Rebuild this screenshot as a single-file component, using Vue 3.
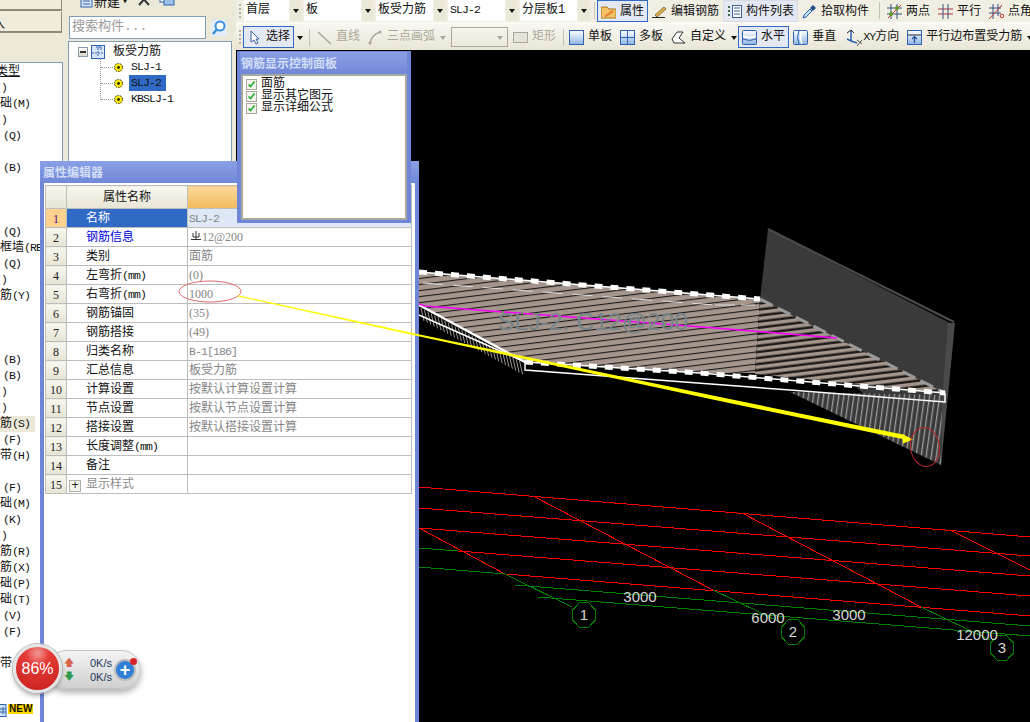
<template>
  <div class="app">
    <!-- left: component type list, clipped by the window edge -->
    <aside class="side">
      <div class="side-btn first"></div>
      <div class="side-btn"><span class="clip">入</span></div>
      <div class="side-list">
        <div v-for="(r, i) in sideRows" :key="i" :class="['side-row', r.cls]">
          <template v-if="r.cjk">{{ r.cjk }}</template><span v-if="r.lat" class="la">{{ r.lat }}</span>
        </div>
        <div class="side-row new-row">
          <svg width="7" height="13" viewBox="0 0 7 13"><rect x="-3" y=".5" width="9" height="12" fill="#cfe2f7" stroke="#2f62b0"/><path d="M3 3v7M-1 5h7M-1 8h7" stroke="#2f62b0"/></svg>
          <span class="new-tag">NEW</span>
        </div>
      </div>
    </aside>

    <!-- component tree -->
    <section class="tree-panel">
      <div class="tree-tools">
        <svg width="14" height="14" viewBox="0 0 14 14"><rect x="2" y="0" width="11" height="13" fill="#d9e6f7" stroke="#2f62b0"/><path d="M4 4h7M4 7h7M4 10h7" stroke="#2f62b0"/><path d="M0 1h4" stroke="#e8a020" stroke-width="2"/></svg>
        <span class="new-label">新建</span>
        <span class="caret">▾</span>
        <svg class="del" width="12" height="12" viewBox="0 0 12 12"><path d="M1 0l10 11M11 0L1 11" stroke="#333" stroke-width="2"/></svg>
        <svg class="copy" width="16" height="12" viewBox="0 0 16 12"><rect x="1" y="0" width="9" height="8" fill="#fff" stroke="#2f62b0"/><rect x="5" y="3" width="10" height="8" fill="#9cc0ea" stroke="#2f62b0"/></svg>
      </div>
      <div class="search">
        <div class="search-input">搜索构件...</div>
        <svg width="18" height="18" viewBox="0 0 18 18"><rect x="1" y="1" width="16" height="16" rx="2" fill="#e3eefb"/><circle cx="10" cy="7" r="4.5" fill="#fff" stroke="#3b8fd8" stroke-width="2"/><path d="M7 10l-4 5" stroke="#3b8fd8" stroke-width="2.4"/></svg>
      </div>
      <div class="tree">
        <div class="tree-root">
          <span class="minus"></span>
          <svg width="14" height="14" viewBox="0 0 14 14"><rect x=".5" y=".5" width="13" height="13" fill="#d8e6f8" stroke="#2f62b0"/><path d="M1 8h12M7 3v9" stroke="#2f62b0" stroke-dasharray="2 1"/><path d="M5 2h5v3" fill="none" stroke="#2f62b0"/></svg>
          <span class="root-name">板受力筋</span>
        </div>
        <div class="tree-items">
          <div v-for="t in treeItems" :key="t" class="tree-item">
            <span class="dots"></span>
            <svg width="11" height="11" viewBox="0 0 11 11"><circle cx="5.5" cy="5.5" r="4" fill="#ffee00" stroke="#222" stroke-dasharray="1.5 1"/><circle cx="5.5" cy="5.5" r="1.4" fill="#222"/></svg>
            <span :class="['item-name', 'la', { selected: t === 'SLJ-2' }]">{{ t }}</span>
          </div>
        </div>
      </div>
    </section>

    <main class="main">
      <div class="tb tb1">
        <span class="grip"></span>
        <div v-for="c in combos" :key="c.text" :class="['combo', c.cls]">
          <span class="combo-text" :class="{ la: c.lat }">{{ c.text }}</span>
          <span class="combo-arrow"></span>
        </div>
        <span class="sep sep-a"></span>

        <div class="btn on">
          <svg class="ic" viewBox="0 0 15 15"><path d="M0 3h6l2 2h7v9H0z" fill="#f2c464" stroke="#a87a20"/><path d="M3 12l8-6 2 2-8 5z" fill="#e9863a"/></svg>属性
        </div>
        <div class="btn">
          <svg class="ic" viewBox="0 0 15 15"><path d="M3 11l9-8 2 2-9 8z" fill="#e5b04a" stroke="#5a4a20" stroke-width=".7"/><path d="M0 13.500h13" stroke="#222"/></svg>编辑钢筋
        </div>
        <div class="btn soft">
          <svg class="ic" viewBox="0 0 15 15"><rect x="5.500" y="1.500" width="9" height="12" fill="#fff" stroke="#3a5f90"/><path d="M7 4h6M7 7h6M7 10h6" stroke="#3a5f90"/><path d="M1 3h2M1 7h2M1 11h2" stroke="#3a6a50" stroke-width="2"/></svg>构件列表
        </div>
        <div class="btn">
          <svg class="ic" viewBox="0 0 15 15"><path d="M1 14l1-3 6-6 2 2-6 6z" fill="#bfe0f5" stroke="#2a62a8"/><path d="M8 4l3-3 3 3-3 3z" fill="#204f90"/></svg>拾取构件
        </div>
        <span class="sep sep-b"></span>
        <div class="btn">
          <svg class="ic" viewBox="0 0 15 15"><path d="M0 4h15M0 10h15M4 0v15M10 0v15" stroke="#33507e"/><path d="M1 14L14 1" stroke="#d23030"/><circle cx="4" cy="10" r="2" fill="#5a9a20"/><circle cx="10" cy="4" r="2" fill="#5a9a20"/></svg>两点
        </div>
        <div class="btn">
          <svg class="ic" viewBox="0 0 15 15"><path d="M0 5h15M0 10h15" stroke="#b03040"/><path d="M5 0v15M10 0v15" stroke="#33507e"/></svg>平行
        </div>
        <div class="btn">
          <svg class="ic" viewBox="0 0 15 15"><path d="M0 4h12M0 9h12M4 0v15M9 0v12" stroke="#33507e"/><path d="M0 15L13 1" stroke="#d23030"/><circle cx="13" cy="12" r="1.800" fill="none" stroke="#d23030"/></svg>点角
        </div>
      </div>

      <div class="tb tb2">
        <span class="grip"></span>
        <div class="btn on">
          <svg class="ic" viewBox="0 0 15 15"><path d="M4 1v11l3-2 2 4 2-1-2-4h3z" fill="#fff" stroke="#3a5fa0"/></svg>选择
        </div>
        <span class="arrow wide"></span>
        <span class="sep sep-c"></span>
        <div class="btn off">
          <svg class="ic" viewBox="0 0 15 15"><path d="M1 2l13 12" stroke="#aca899" stroke-width="1.500"/></svg>直线
        </div>
        <div class="btn off">
          <svg class="ic" viewBox="0 0 15 15"><path d="M2 14Q3 5 12 2" fill="none" stroke="#aca899" stroke-width="1.500"/><circle cx="2" cy="13" r="1.500" fill="#aca899"/><circle cx="12" cy="2" r="1.500" fill="#aca899"/></svg>三点画弧
        </div>
        <span class="arrow dim"></span>
        <div class="off-combo"><span class="arrow dim"></span></div>
        <div class="btn off">
          <svg class="ic" viewBox="0 0 15 15"><rect x=".5" y="2.500" width="14" height="10" fill="#e6e4da" stroke="#aca899"/></svg>矩形
        </div>
        <span class="sep sep-d"></span>
        <div class="btn">
          <svg class="ic" viewBox="0 0 15 15"><rect x=".5" y=".5" width="14" height="14" fill="url(#pane)" stroke="#2f62b0"/></svg>单板
        </div>
        <div class="btn">
          <svg class="ic" viewBox="0 0 15 15"><rect x=".5" y=".5" width="14" height="14" fill="url(#pane)" stroke="#2f62b0"/><path d="M7.500 0v15M0 7.500h15" stroke="#2f62b0"/></svg>多板
        </div>
        <div class="btn">
          <svg class="ic" viewBox="0 0 15 15"><path d="M1 9l5-7h6l-4 6 6 5H3z" fill="#fff" stroke="#333"/></svg>自定义
        </div>
        <span class="arrow"></span>
        <div class="btn on">
          <svg class="ic" viewBox="0 0 15 15"><rect x=".5" y=".5" width="14" height="14" rx="1" fill="url(#pane)" stroke="#2f62b0"/><path d="M1 6q6.500 3 13 0" fill="none" stroke="#fff" stroke-width="1.500"/><path d="M1 9q6.500 3 13 0" fill="none" stroke="#2f62b0"/></svg>水平
        </div>
        <div class="btn">
          <svg class="ic" viewBox="0 0 15 15"><rect x=".5" y=".5" width="14" height="14" rx="1" fill="url(#pane)" stroke="#2f62b0"/><path d="M9 1q-3 6.500 0 13" fill="none" stroke="#fff" stroke-width="1.500"/><path d="M6 1q-3 6.500 0 13" fill="none" stroke="#2f62b0"/></svg>垂直
        </div>
        <div class="btn xy">
          <svg class="ic-xy" viewBox="0 0 19 17"><path d="M7 1v11l-4-2M7 12l6 2" fill="none" stroke="#2f62b0" stroke-width="1.500"/><path d="M3 4l4-3 3 3" fill="none" stroke="#222"/><path d="M13 11l5 4M18 11l-5 6" stroke="#333" stroke-width=".8"/></svg><span><span class="la">XY</span>方向</span>
        </div>
        <div class="btn">
          <svg class="ic" viewBox="0 0 15 15"><rect x=".5" y=".5" width="14" height="14" fill="url(#pane)" stroke="#2f62b0"/><path d="M1 5h13" stroke="#333"/><path d="M7.500 13V7M5 9l2.500-2.500L10 9" fill="none" stroke="#1c4f9a" stroke-width="1.200"/></svg>平行边布置受力筋
        </div>
        <span class="arrow"></span>
      </div>

      <!-- 3d view, drawn in page coordinates -->
      <svg class="view" viewBox="236 50 794 672">
        <defs>
          <linearGradient id="pane" x1="0" y1="0" x2="0" y2="1"><stop offset="0" stop-color="#fff"/><stop offset="1" stop-color="#8fb4e6"/></linearGradient>
          <pattern id="hatch" width="40" height="6" patternUnits="userSpaceOnUse" patternTransform="rotate(-7)">
            <rect width="40" height="6" fill="#a5968d"/>
            <rect y="3" width="40" height="1.100" fill="#1c1a18"/>
          </pattern>
          <pattern id="hatch2" width="40" height="6" patternUnits="userSpaceOnUse" patternTransform="rotate(-7)">
            <rect width="40" height="6" fill="#a5968d"/>
            <rect y="2.500" width="40" height="2.400" fill="#181614"/>
          </pattern>
          <pattern id="bars" width="5" height="20" patternUnits="userSpaceOnUse" patternTransform="rotate(8)">
            <rect width="5" height="20" fill="#3a3a3a"/>
            <rect width="1.300" height="20" fill="#9c9a9a"/>
          </pattern>
        </defs>

        <!-- wall -->
        <polygon points="768,229 950,323 945,400 941,465 760,299" fill="#3a3a3a"/>
        <polygon points="948,323 955,323 941,466 942,400" fill="#4a4a4a"/>
        <path d="M768,229L954,322" stroke="#4c4c4c" stroke-width="2"/>

        <!-- plate -->
        <polygon points="790,392 942,395 941,465" fill="url(#bars)"/>
        <polygon points="419,272 760,299 755,373 700,373 525,362 419,304" fill="url(#hatch)"/>
        <polygon points="760,299 945,393 755,374" fill="url(#hatch2)"/>
        <path d="M760,299L945,393" stroke="#9a9a9a" stroke-width="3" stroke-dasharray="14 6"/>

        <line v-for="(t, i) in ticks" :key="i" :x1="t.x" :y1="t.y" :x2="t.x + 3" :y2="t.y + 13" stroke="#9c9690"/>

        <path d="M419,272L760,299" stroke="#fff" stroke-width="1.500"/>
        <path d="M419,272L760,299" stroke="#fff" stroke-width="5" stroke-dasharray="8 8"/>
        <path d="M423,283L715,305" stroke="#ddd" stroke-width="1" stroke-dasharray="20 10"/>
        <path d="M715,305L755,305" stroke="#ddd" stroke-width="1" stroke-dasharray="20 6"/>
        <path d="M525,362L700,373L945,393" stroke="#fff" stroke-width="1.500" fill="none"/>
        <path d="M525,362L700,373L945,393" stroke="#fff" stroke-width="5" stroke-dasharray="8 8" fill="none"/>
        <path d="M419,305L525,362" stroke="#fff" stroke-width="2.500"/>
        <path d="M419,315L525,362V370L790,390L945,402V393" stroke="#fff" stroke-width="1.500" fill="none"/>

        <path d="M419,304L425,306L715,328L837,338" stroke="#f0f" stroke-width="1.500" fill="none"/>
        <circle v-for="d in greenDots" :key="d" :cx="d" :cy="306 + (d - 425) * 0.0759" r="1" fill="#22cc22"/>
        <text x="498" y="330" class="plate-label" textLength="190" lengthAdjust="spacingAndGlyphs">SLJ-2. C12@200</text>

        <!-- axis grid -->
        <g stroke="#f00" stroke-width="1" shape-rendering="crispEdges">
          <line x1="419" y1="487" x2="1030" y2="537"/>
          <line x1="419" y1="508" x2="1030" y2="556"/>
          <line x1="419" y1="528" x2="1030" y2="576"/>
          <line x1="458" y1="551" x2="1030" y2="596"/>
          <line x1="505" y1="574" x2="1030" y2="616"/>
          <line x1="419" y1="528" x2="505" y2="574"/>
          <line x1="533" y1="496" x2="713" y2="590"/>
          <line x1="742" y1="513" x2="921" y2="607"/>
          <line x1="950" y1="530" x2="1030" y2="570"/>
        </g>
        <g stroke="#008000" stroke-width="1" fill="none" shape-rendering="crispEdges">
          <line x1="419" y1="548" x2="458" y2="551"/>
          <line x1="419" y1="567" x2="505" y2="574"/>
          <line x1="505" y1="574" x2="572" y2="607"/>
          <line x1="713" y1="590" x2="782" y2="623"/>
          <line x1="921" y1="607" x2="990" y2="640"/>
          <line x1="515" y1="585" x2="1030" y2="626"/>
          <line x1="538" y1="597" x2="1030" y2="636"/>
          <polygon v-for="a in axes" :key="a.n" :points="octagon(a.x, a.y)"/>
        </g>
        <g class="dim">
          <text x="640" y="602">3000</text>
          <text x="768" y="623">6000</text>
          <text x="849" y="620">3000</text>
          <text x="977" y="640">12000</text>
          <text v-for="a in axes" :key="a.n" :x="a.x" :y="a.y + 5">{{ a.n }}</text>
        </g>
      </svg>
    </main>

    <!-- floating property editor -->
    <div class="editor">
      <div class="win-title">属性编辑器</div>
      <table class="grid">
        <colgroup><col class="c-no"><col class="c-name"><col></colgroup>
        <thead>
          <tr><th class="no"></th><th class="hd">属性名称</th><th class="hd-val"></th></tr>
        </thead>
        <tbody>
          <tr v-for="(r, i) in props" :key="i" :class="{ active: i === 0 }">
            <td class="no la-no">{{ i + 1 }}</td>
            <td :class="['name', { link: i === 1, muted: i === 14 }]">
              <span v-if="i === 14" class="plus">+</span>{{ r.name }}<span v-if="r.unit" class="la">(mm)</span>
            </td>
            <td class="val">
              <svg v-if="r.bar" class="rebar" width="10" height="10" viewBox="0 0 10 10"><path d="M2 2v4h6V2M5 0v8M0 8.500h10" fill="none" stroke="#333"/></svg><span :class="r.cls">{{ r.val }}</span>
            </td>
          </tr>
        </tbody>
      </table>
    </div>

    <!-- rebar display panel -->
    <div class="panel">
      <div class="win-title">钢筋显示控制面板</div>
      <div class="panel-body">
        <label v-for="o in options" :key="o" class="check">
          <svg width="11" height="11" viewBox="0 0 11 11"><rect x=".5" y=".5" width="10" height="10" fill="#f4f4ee" stroke="#a8a89c"/><path d="M2.500 5.500l2 2 4-5" fill="none" stroke="#1fae2c" stroke-width="1.600"/></svg>
          <span>{{ o }}</span>
        </label>
      </div>
    </div>

    <!-- hand drawn marks over everything -->
    <svg class="marks" viewBox="0 0 1030 722">
      <ellipse cx="210" cy="291.500" rx="31" ry="10.500" fill="none" stroke="#e06a6a"/>
      <polygon points="238,295.300 415,333.500 715,396 905,435 905,439.500 715,400 415,335.500 238,296.500" fill="#ff0"/>
      <polygon points="902,434 913,439.500 903,443.500" fill="#ff0"/>
      <ellipse cx="925" cy="447" rx="14.500" ry="19.500" fill="none" stroke="#b82a2a" transform="rotate(-8 925 447)"/>
    </svg>

    <!-- speed ball -->
    <div class="ball">
      <div class="pill">
        <div class="rates">
          <div class="rate"><span class="up">🡅</span><span>0K/s</span></div>
          <div class="rate"><span class="down">🡇</span><span>0K/s</span></div>
        </div>
        <span class="add">+<i></i></span>
      </div>
      <div class="gauge">86%</div>
    </div>
  </div>
</template>

<script setup>
const sideRows = [
  { cjk: '类型', cls: 'head' }, { lat: ')', cls: 'in1' }, { cjk: '础', lat: '(M)' }, { lat: ')', cls: 'in1' }, { lat: '(Q)', cls: 'in2' },
  {}, { lat: '(B)', cls: 'in2' }, {}, {}, {},
  { lat: '(Q)', cls: 'in2' }, { cjk: '框墙', lat: '(RE' }, { lat: '(Q)', cls: 'in2' }, { lat: ')', cls: 'in1' }, { cjk: '筋', lat: '(Y)' },
  {}, {}, {}, { lat: '(B)', cls: 'in2' }, { lat: '(B)', cls: 'in2' },
  { lat: ')', cls: 'in1' }, { lat: ')', cls: 'in1' }, { cjk: '筋', lat: '(S)', cls: 'hi' }, { lat: '(F)', cls: 'in2' }, { cjk: '带', lat: '(H)' },
  {}, { lat: '(F)', cls: 'in2' }, { cjk: '础', lat: '(M)' }, { lat: '(K)', cls: 'in2' }, { lat: ')', cls: 'in1' },
  { cjk: '筋', lat: '(R)' }, { cjk: '筋', lat: '(X)' }, { cjk: '础', lat: '(P)' }, { cjk: '础', lat: '(T)' }, { lat: '(V)', cls: 'in2' },
  { lat: '(F)', cls: 'in2' }, {}, { cjk: '带' }, {}, {}
]

const treeItems = ['SLJ-1', 'SLJ-2', 'KBSLJ-1']

const combos = [
  { text: '首层', cls: 'c1' },
  { text: '板', cls: 'c2' },
  { text: '板受力筋', cls: 'c3' },
  { text: 'SLJ-2', cls: 'c4', lat: true },
  { text: '分层板1', cls: 'c5' }
]

const props = [
  { name: '名称', val: 'SLJ-2', cls: 'la' },
  { name: '钢筋信息', val: '12@200', cls: 'num', bar: true },
  { name: '类别', val: '面筋' },
  { name: '左弯折', unit: true, val: '(0)', cls: 'num' },
  { name: '右弯折', unit: true, val: '1000', cls: 'num' },
  { name: '钢筋锚固', val: '(35)', cls: 'num' },
  { name: '钢筋搭接', val: '(49)', cls: 'num' },
  { name: '归类名称', val: 'B-1[186]', cls: 'la' },
  { name: '汇总信息', val: '板受力筋' },
  { name: '计算设置', val: '按默认计算设置计算' },
  { name: '节点设置', val: '按默认节点设置计算' },
  { name: '搭接设置', val: '按默认搭接设置计算' },
  { name: '长度调整', unit: true, val: '' },
  { name: '备注', val: '' },
  { name: '显示样式', val: '' }
]

const options = ['面筋', '显示其它图元', '显示详细公式']

const axes = [
  { n: 1, x: 584, y: 615 },
  { n: 2, x: 793, y: 632 },
  { n: 3, x: 1002, y: 648 }
]

const octagon = (cx, cy) => {
  const pts = []
  for (let i = 0; i < 8; i++) {
    const a = (Math.PI / 4) * i + Math.PI / 8
    pts.push(`${cx + 12.5 * Math.cos(a)},${cy + 13 * Math.sin(a)}`)
  }
  return pts.join(' ')
}

// short bent bars hanging under the left edge of the plate
const ticks = []
for (let x = 421; x < 522; x += 3.4) {
  ticks.push({ x, y: 308 + (x - 421) * 0.54 })
}

const greenDots = [503, 522, 560, 578, 608, 628, 650, 665]
</script>

<style scoped>
.app {
  position: relative;
  width: 1030px;
  height: 722px;
  overflow: hidden;
  display: grid;
  grid-template-columns: 68px 168px 794px;
  background: #ece9d8;
  color: #111;
  font: 12px/16px "Liberation Mono", "Noto Sans CJK SC", monospace;
}

.la {
  font-size: 11.5px;
  letter-spacing: -0.9px;
}
.num {
  font-family: "Liberation Serif", serif;
  font-size: 12px;
}

/* left list */
.side {
  display: flex;
  flex-direction: column;
  height: 722px;
  overflow: hidden;
}
.side-btn {
  width: 62px;
  height: 21px;
  margin-bottom: 1px;
  background: #efecdc;
  border-bottom: 2px solid #8c8a7c;
  border-right: 1px solid #8c8a7c;
  box-sizing: border-box;
  overflow: hidden;
  line-height: 26px;
}
.side-btn.first {
  height: 11px;
}
.clip {
  margin-left: -7px;
}
.side-list {
  margin-top: 28px;
  width: 63px;
  flex: 1;
  background: #fff;
  border-top: 1px solid #7f9db9;
  border-right: 1px solid #7f9db9;
  box-sizing: border-box;
  padding-top: 1px;
  white-space: nowrap;
  overflow: hidden;
}
.side-row {
  height: 16px;
}
.head {
  text-indent: -4px;
  text-decoration: underline;
}
.in1 {
  padding-left: 1px;
}
.in2 {
  padding-left: 3px;
}
.hi {
  width: 35px;
  background: #ece9d8;
}
.new-row {
  display: flex;
  align-items: flex-start;
  gap: 1px;
}
.new-tag {
  background: #ffd800;
  font: bold 10px/10px "Liberation Sans", sans-serif;
  padding: 0 1px;
}

/* tree */
.tree-panel {
  height: 722px;
  display: flex;
  flex-direction: column;
}
.tree-tools {
  height: 15px;
  box-sizing: border-box;
  display: flex;
  align-items: flex-end;
  padding: 0 0 7px 11px;
  overflow: hidden;
}
.new-label {
  margin: 0 2px 0 1px;
  line-height: 16px;
  position: relative;
  top: 3px;
  font-size: 13px;
}
.caret {
  font-size: 10px;
  line-height: 12px;
}
.del {
  margin: 0 0 2px 10px;
}
.copy {
  margin: 0 0 2px 9px;
}
.search {
  height: 25px;
  display: flex;
  align-items: center;
  gap: 4px;
  padding: 0 0 1px 1px;
}
.search-input {
  width: 137px;
  height: 23px;
  box-sizing: border-box;
  background: #fff;
  border: 1px solid #7f9db9;
  color: #9a9a9a;
  font-size: 13px;
  line-height: 20px;
  padding-left: 2px;
}
.tree {
  width: 164px;
  flex: 1;
  box-sizing: border-box;
  background: #fff;
  border: 1px solid #7f9db9;
  padding: 3px 0 0 9px;
}
.tree-root {
  display: flex;
  align-items: center;
  height: 14px;
}
.minus {
  width: 8px;
  height: 8px;
  border: 1px solid #8c9aa8;
  background: linear-gradient(#fff, #d8d8cc);
  position: relative;
  margin-right: 3px;
}
.minus::after {
  content: "";
  position: absolute;
  left: 1px;
  right: 1px;
  top: 3px;
  height: 2px;
  background: #333;
}
.root-name {
  margin-left: 8px;
}
.tree-items {
  margin: 0 0 0 22px;
  border-left: 1px dotted #998;
  height: 41px;
}
.tree-item {
  height: 16px;
  display: flex;
  align-items: center;
}
.dots {
  width: 12px;
  border-top: 1px dotted #998;
}
.item-name {
  margin-left: 6px;
  padding: 0 1px;
  line-height: 16px;
}
.selected {
  background: #316ac5;
  width: 37px;
  box-sizing: border-box;
  margin-left: 5px;
  padding-left: 2px;
}

/* toolbars */
.main {
  display: flex;
  flex-direction: column;
  height: 722px;
  overflow: hidden;
}
.tb {
  display: flex;
  align-items: center;
  padding-left: 3px;
  white-space: nowrap;
  flex: none;
}
.tb1 {
  background: #f1efe4;
  border-bottom: 2px solid #fbfaf5;
  padding-bottom: 1px;
  box-sizing: content-box;
  height: 21px;
}
.tb2 {
  height: 26px;
  background: linear-gradient(#f8f7f1, #e9e6d6);
}
.grip {
  width: 2px;
  height: 14px;
  margin-right: 2px;
  background: repeating-linear-gradient(#b5b2a2 0 2px, transparent 2px 4px);
  flex: none;
}
.combo {
  display: flex;
  flex: none;
  height: 21px;
  margin-right: 2px;
  align-items: stretch;
}
.c1 {
  width: 58px;
  margin-left: 1px;
}
.c2, .c3, .c4, .c5 {
  width: 70px;
}
.combo-text {
  background: #fff;
  padding-left: 2px;
  flex: 1;
  line-height: 20px;
}
.combo-arrow {
  width: 12px;
  margin-left: 1px;
  background: #ece9d8;
  position: relative;
}
.combo-arrow::after,
.arrow::after {
  content: "";
  position: absolute;
  left: 3px;
  top: 9px;
  border: 3px solid transparent;
  border-top: 4px solid #111;
  border-bottom: 0;
}
.sep {
  width: 1px;
  height: 17px;
  background: #c5c2b0;
  flex: none;
}
.sep-a { margin: 0 2px 0 2px; }
.sep-b { margin: 0 3px 0 6px; }
.sep-c { margin: 0 3px 0 2px; }
.sep-d { margin: 0 1px 0 3px; }
.btn {
  display: flex;
  align-items: center;
  gap: 4px;
  height: 22px;
  box-sizing: border-box;
  padding: 0 4px;
  flex: none;
  border: 1px solid transparent;
  border-width: 1px 0;
}
.btn.on {
  border: 1px solid #316ac5;
  background: #e4e8f2;
  padding: 0 3px;
}
.btn.soft {
  background: #e4e8f2;
  outline: 1px solid #d6dbe6;
  outline-offset: -1px;
}
.btn.off {
  color: #aca899;
}
.btn.xy {
  gap: 0;
}
.tb1 .btn,
.tb1 .btn.on {
  padding-top: 2px;
}
.ic {
  width: 15px;
  height: 15px;
  flex: none;
}
.ic-xy {
  width: 19px;
  height: 17px;
  flex: none;
}
.arrow {
  position: relative;
  width: 8px;
  height: 22px;
  flex: none;
}
.arrow::after {
  left: 1px;
  top: 10px;
}
.arrow.wide {
  width: 13px;
}
.arrow.wide::after {
  left: 3px;
}
.arrow.dim::after {
  border-top-color: #aca899;
}
.off-combo {
  width: 57px;
  height: 20px;
  flex: none;
  margin: 0 1px 0 4px;
  box-sizing: border-box;
  border: 1px solid #aca899;
  display: flex;
  justify-content: flex-end;
  padding-right: 3px;
  align-items: center;
}
.view {
  display: block;
  width: 794px;
  height: 672px;
  flex: none;
  background: #000;
}
.plate-label {
  font: 24px "Liberation Sans", sans-serif;
  fill: #76858a;
}
.dim text {
  font: 15px "Liberation Sans", sans-serif;
  fill: #d8d8d8;
  text-anchor: middle;
}

/* windows */
.win-title {
  height: 22px;
  padding-left: 1px;
  font-weight: bold;
  line-height: 26px;
  color: #d3def7;
  background: linear-gradient(#8aa0e4, #7088d8);
  overflow: hidden;
}
.editor {
  position: absolute;
  left: 40px;
  top: 161px;
  width: 379px;
  height: 561px;
  box-sizing: border-box;
  background: #fff;
  border: solid #6f86d8;
  border-width: 0 4px;
}
.editor .win-title {
  margin: 0 -4px;
  padding-left: 3px;
}
.grid {
  margin-left: 1px;
  border-collapse: collapse;
  table-layout: fixed;
  width: 367px;
  margin-top: 2px;
}
.c-no { width: 21px; }
.c-name { width: 121px; }
.grid th,
.grid td {
  border: 1px solid #bdbdbd;
  padding: 1px 0 0;
  height: 17px;
  font-weight: normal;
  white-space: nowrap;
  overflow: hidden;
}
.grid th {
  height: 21px;
}
.grid .no {
  text-align: center;
  background: linear-gradient(#f8f7f0, #e7e4d4);
  color: #222;
}
.la-no {
  font-family: "Liberation Serif", serif;
  font-size: 12px;
}
.hd {
  font-size: 12px;
  background: linear-gradient(#f8f7f0, #e9e6d6);
}
.hd-val {
  background: linear-gradient(#fbd99c, #f2ba5c);
}
.name {
  padding-left: 19px !important;
}
.link {
  color: #0000e0;
}
.muted {
  color: #8c8c8c;
  padding-left: 2px !important;
}
.plus {
  display: inline-block;
  box-sizing: border-box;
  width: 12px;
  height: 12px;
  margin-right: 5px;
  border: 1px solid #b0b0a8;
  background: #f4f3ea;
  color: #222;
  line-height: 10px;
  text-align: center;
  vertical-align: -1px;
}
.val {
  color: #858585;
  padding-left: 1px !important;
}
.rebar {
  margin: 0 1px 0 2px;
}
.active .no {
  background: #fdd18e !important;
  color: #52107a !important;
}
.active .name {
  background: #316ac5;
  color: #fff;
}
.active .val {
  background: #dfe8f5;
}

.panel {
  position: absolute;
  left: 237px;
  top: 51px;
  width: 174px;
  height: 172px;
  box-sizing: border-box;
  background: #7088d8;
  border: 4px solid #6f86d8;
  border-top-width: 1px;
  border-left-width: 3px;
}
.panel-body {
  height: 146px;
  box-sizing: border-box;
  background: #fff;
  border: 2px solid #a7a89e;
  padding: 2px 0 0 3px;
  margin-left: 1px;
}
.check {
  display: flex;
  align-items: center;
  gap: 4px;
  height: 12px;
  line-height: 12px;
}

.marks {
  position: absolute;
  left: 0;
  top: 0;
  width: 1030px;
  height: 722px;
  pointer-events: none;
}

/* network speed ball */
.ball {
  position: absolute;
  left: 13px;
  top: 644px;
  width: 129px;
  height: 50px;
}
.pill {
  position: absolute;
  left: 34px;
  top: 6px;
  width: 94px;
  height: 39px;
  box-sizing: border-box;
  padding-left: 16px;
  display: flex;
  align-items: center;
  border: 1px solid #c4c4c4;
  border-radius: 20px;
  background: linear-gradient(#f4f4f4, #d0d0d0);
  box-shadow: 0 4px 6px rgba(0, 0, 0, 0.3);
}
.rates {
  width: 48px;
  font: 11px/14px "Liberation Sans", sans-serif;
  color: #1c3a60;
}
.rate {
  display: flex;
  justify-content: space-between;
}
.up {
  color: #d8604c;
  font-size: 10px;
}
.down {
  color: #2f9a50;
  font-size: 10px;
}
.add {
  position: relative;
  width: 18px;
  height: 18px;
  margin-left: 4px;
  border-radius: 50%;
  background: #2f7fd8;
  box-shadow: 0 0 0 2px #bbb;
  color: #fff;
  font: bold 18px/18px "Liberation Sans", sans-serif;
  text-align: center;
}
.add i {
  position: absolute;
  right: -3px;
  top: -3px;
  width: 7px;
  height: 7px;
  border-radius: 50%;
  background: #d8232a;
}
.gauge {
  position: absolute;
  left: 0;
  top: 0;
  width: 49px;
  height: 49px;
  box-sizing: border-box;
  border: 3px solid #e4e4e4;
  border-radius: 50%;
  background: radial-gradient(circle at 50% 15%, #f29a98 0, #e53a36 28%, #c8201e 100%);
  box-shadow: 0 0 0 1px #bbb, 0 3px 4px rgba(0, 0, 0, 0.3);
  color: #fff;
  font: 16px/43px "Liberation Sans", sans-serif;
  text-align: center;
}
</style>

<style>
html, body {
  margin: 0;
  overflow: hidden;
}
</style>
